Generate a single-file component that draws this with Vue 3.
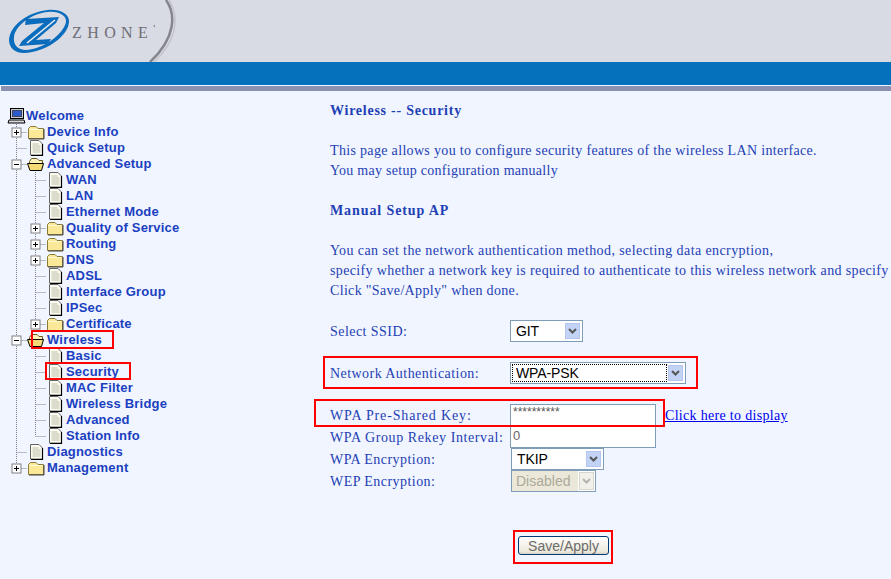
<script setup>
const tree = [
  { label: 'Device Info', level: 0, kind: 'folder', box: '+' },
  { label: 'Quick Setup', level: 0, kind: 'doc' },
  { label: 'Advanced Setup', level: 0, kind: 'open', box: '-' },
  { label: 'WAN', level: 1, kind: 'doc' },
  { label: 'LAN', level: 1, kind: 'doc' },
  { label: 'Ethernet Mode', level: 1, kind: 'doc' },
  { label: 'Quality of Service', level: 1, kind: 'folder', box: '+' },
  { label: 'Routing', level: 1, kind: 'folder', box: '+' },
  { label: 'DNS', level: 1, kind: 'folder', box: '+' },
  { label: 'ADSL', level: 1, kind: 'doc' },
  { label: 'Interface Group', level: 1, kind: 'doc' },
  { label: 'IPSec', level: 1, kind: 'doc' },
  { label: 'Certificate', level: 1, kind: 'folder', box: '+', last: true },
  { label: 'Wireless', level: 0, kind: 'open', box: '-' },
  { label: 'Basic', level: 1, kind: 'doc' },
  { label: 'Security', level: 1, kind: 'doc' },
  { label: 'MAC Filter', level: 1, kind: 'doc' },
  { label: 'Wireless Bridge', level: 1, kind: 'doc' },
  { label: 'Advanced', level: 1, kind: 'doc' },
  { label: 'Station Info', level: 1, kind: 'doc', last: true },
  { label: 'Diagnostics', level: 0, kind: 'doc' },
  { label: 'Management', level: 0, kind: 'folder', box: '+', last: true }
]
</script>

<template>
  <div class="page">
    <header class="top">
      <div class="brand">
        <svg class="logo" width="180" height="62" viewBox="0 0 180 62">
          <path d="M166 0C176 14 176 38 150 62" fill="none" stroke="#85858d" stroke-width="2.5" />
          <path d="M169 0C179 16 178 40 154 62" fill="none" stroke="#c4c4cc" stroke-width="1.5" />
          <path fill-rule="evenodd" fill="#0a6cbc" d="M48 10C60 9 69 14 69 21C69 36 46 52 24 53C14 53 9 47 9 40C10 25 28 12 48 10ZM48 12C32 13 15 26 14 37C13 45 18 50 26 50C43 49 63 35 66 22C67 16 59 11 48 12Z" />
          <path fill="#0a6cbc" d="M26 19L59 17L56 23L36 40L51 39L48 44L19 46L22 41L44 23L25 25Z" />
          <path fill="none" stroke="#e8ecf4" stroke-width="1.6" d="M55 20L27 43" />
        </svg>
        <span class="wordmark">ZHONE<sup>'</sup></span>
      </div>
    </header>
    <div class="blue"></div>
    <div class="band"></div>

    <div class="body">
      <nav class="tree">
        <div class="row">
          <svg class="slot" width="18" height="16" viewBox="0 0 18 16">
            <rect x="2.5" y="0.5" width="13" height="10" fill="#c8ccd8" stroke="#000" />
            <rect x="4.5" y="2.5" width="9" height="6" fill="#2a5cd0" stroke="#445" />
            <path d="M1 12h15l1 3H0z" fill="#d8d8d8" stroke="#000" stroke-width="1" />
          </svg>
          <a class="label">Welcome</a>
        </div>
        <div v-for="item in tree" :key="item.label" class="row">
          <svg v-if="item.level === 1" class="slot" width="19" height="16" viewBox="0 0 19 16">
            <path d="M8.5 0V16" class="dots" />
          </svg>
          <svg class="slot" width="19" height="16" viewBox="0 0 19 16">
            <path :d="item.last ? 'M8.5 0V8' : 'M8.5 0V16'" class="dots" />
            <path d="M8.5 8.5H19" class="dots" />
            <g v-if="item.box">
              <rect x="4" y="4" width="9" height="9" fill="#fff" stroke="#808080" />
              <path d="M6 8.5h5" stroke="#000" />
              <path v-if="item.box === '+'" d="M8.5 6v5" stroke="#000" />
            </g>
          </svg>
          <svg class="slot icon" width="20" height="16" viewBox="0 0 20 16">
            <g v-if="item.kind === 'doc'">
              <path d="M3.5 0.5H12L15.5 4V15H3.5Z" fill="#fbfbf0" stroke="#666" />
              <path d="M15.5 4V15.5H4" fill="none" stroke="#000" stroke-width="1.2" />
              <path d="M5.5 4h6M5.5 6h8M5.5 8h8M5.5 10h8M5.5 12h8" stroke="#bdbdaa" />
            </g>
            <g v-else-if="item.kind === 'folder'">
              <path d="M1.5 4.5L3.5 2.5H9L11 4.5H16.5V14.5H1.5Z" fill="#fbe997" stroke="#8a7a3a" />
              <path d="M2.5 5.5H15.5" stroke="#fffad8" />
              <path d="M17 5V15H2" fill="none" stroke="#444" />
            </g>
            <g v-else>
              <path d="M2.5 5.5L4.5 2.5H10L12 4.5H15.5V8H2.5Z" fill="#fdf3b8" stroke="#6a5a20" />
              <path d="M0.5 7.5H16.5L14.5 14.5H3Z" fill="#f6da75" stroke="#000" />
            </g>
          </svg>
          <a class="label">{{ item.label }}</a>
        </div>
      </nav>

      <main class="content">
        <h2 class="title">Wireless -- Security</h2>
        <p class="intro">
          <span class="line s33">This page allows you to configure security features of the wireless LAN interface.</span>
          <span class="line s28">You may setup configuration manually</span>
        </p>
        <h2 class="title section">Manual Setup AP</h2>
        <p class="intro">
          <span class="line s41">You can set the network authentication method, selecting data encryption,</span>
          <span class="line s36">specify whether a network key is required to authenticate to this wireless network and specify</span>
          <span class="line s33">Click "Save/Apply" when done.</span>
        </p>

        <form class="form" @submit.prevent>
          <div class="field">
            <label>Select SSID:</label>
            <div class="select ssid">
              <select><option>GIT</option></select>
              <span class="arrow"><svg width="9" height="6" viewBox="0 0 9 6"><path d="M1 1l3.5 3.5L8 1" fill="none" stroke="#555" stroke-width="2" /></svg></span>
            </div>
          </div>
          <div class="field gap">
            <label>Network Authentication:</label>
            <div class="select auth">
              <select class="focused"><option>WPA-PSK</option></select>
              <span class="arrow"><svg width="9" height="6" viewBox="0 0 9 6"><path d="M1 1l3.5 3.5L8 1" fill="none" stroke="#555" stroke-width="2" /></svg></span>
            </div>
          </div>
          <div class="field gap">
            <label class="wide-key">WPA Pre-Shared Key:</label>
            <div class="inline">
              <input class="text secret" type="text" value="**********" />
              <a class="link">Click here to display</a>
            </div>
          </div>
          <div class="field">
            <label class="wide-group">WPA Group Rekey Interval:</label>
            <input class="text" type="text" value="0" />
          </div>
          <div class="field">
            <label>WPA Encryption:</label>
            <div class="select tkip">
              <select><option>TKIP</option></select>
              <span class="arrow"><svg width="9" height="6" viewBox="0 0 9 6"><path d="M1 1l3.5 3.5L8 1" fill="none" stroke="#555" stroke-width="2" /></svg></span>
            </div>
          </div>
          <div class="field">
            <label>WEP Encryption:</label>
            <div class="select wep">
              <select disabled><option>Disabled</option></select>
              <span class="arrow off"><svg width="9" height="6" viewBox="0 0 9 6"><path d="M1 1l3.5 3.5L8 1" fill="none" stroke="#b5b5ae" stroke-width="2" /></svg></span>
            </div>
          </div>
          <div class="actions"><button type="button">Save/Apply</button></div>
        </form>
      </main>
    </div>

    <i class="mark m-wireless"></i>
    <i class="mark m-security"></i>
    <i class="mark m-auth"></i>
    <i class="mark m-key"></i>
    <i class="mark m-save"></i>
  </div>
</template>

<style>
html, body { margin: 0; overflow: hidden; background: #f0f5ff; }
</style>

<style scoped>
.page { position: relative; width: 891px; height: 579px; overflow: hidden; background: #f0f5ff; }
.top { height: 62px; background: #d8dae4; }
.brand { position: relative; height: 62px; }
.logo { display: block; }
.wordmark { position: absolute; left: 72px; top: 24px; font: 16px/18px "Liberation Serif", serif; letter-spacing: 5.4px; color: #6e6e74; }
.wordmark sup { font-size: 11px; line-height: 0; letter-spacing: 0; }
.blue { height: 23px; background: #0570bb; }
.band { height: 5px; margin-top: 1px; margin-left: 1px; background: #8a90b2; }
.body { display: flex; }
.tree { flex: 0 0 322px; padding: 17px 0 0 8px; }
.row { display: flex; align-items: center; height: 16px; }
.slot { flex: none; display: block; overflow: visible; }
.dots { stroke: #808080; stroke-dasharray: 1 1; fill: none; }
.label { font: bold 13px/16px "Liberation Sans", sans-serif; letter-spacing: 0.2px; color: #1a3fc0; white-space: nowrap; }
.content { flex: 1; min-width: 0; padding-top: 10px; font: 14px/20px "Liberation Serif", serif; letter-spacing: 0.33px; color: #1f3fb5; white-space: nowrap; }
.title { margin: 0; font: bold 14px/20px "Liberation Serif", serif; letter-spacing: 0.75px; }
.section { margin-top: 20px; letter-spacing: 0.9px; }
.intro { margin: 20px 0 0; }
.line { display: block; }
.s28 { letter-spacing: 0.28px; }
.s33 { letter-spacing: 0.33px; }
.s36 { letter-spacing: 0.36px; }
.s41 { letter-spacing: 0.41px; }
.form { margin-top: 19px; }
.field { display: grid; grid-template-columns: 180px 1fr; align-items: center; height: 22px; }
.field.gap { margin-top: 20px; }
.field label { padding-top: 2px; letter-spacing: 0.45px; }
.field label.wide-key { letter-spacing: 0.85px; }
.field label.wide-group { letter-spacing: 0.6px; }
.select { display: flex; align-items: stretch; height: 22px; box-sizing: border-box; border: 1px solid #7f9db9; background: #fff; }
.select select { flex: 1; min-width: 0; appearance: none; border: 0; margin: 1px 0 1px 1px; padding: 0 0 0 4px; background: transparent; font: 14px "Liberation Sans", sans-serif; letter-spacing: -0.1px; color: #000; }
.select select.focused { outline: 1px dotted #000; outline-offset: -1px; }
.select select:disabled { background: #ebe8d9; color: #aca899; margin: 0; opacity: 1; letter-spacing: 0; }
.arrow { flex: none; width: 15px; margin: 2px 2px 2px 1px; display: flex; align-items: center; justify-content: center; background: #c3d3f5; border: 1px solid #b4c6ee; box-sizing: border-box; }
.arrow.off { background: #f1f0ea; border-color: #d8d6cc; margin: 1px; }
.ssid { width: 73px; }
.auth { width: 176px; }
.tkip { width: 93px; margin-left: 1px; }
.wep { width: 85px; margin-left: 1px; }
.inline { display: flex; align-items: center; }
.text { width: 146px; height: 22px; box-sizing: border-box; border: 1px solid #7f9db9; background: #fff; padding: 0 0 3px 2px; font: 13px "Liberation Sans", sans-serif; color: #666; outline: 0; }
.secret { color: #555; padding-bottom: 7px; font-size: 12px; }
.link { margin: 2px 0 0 9px; letter-spacing: 0.31px; color: #0000ee; text-decoration: underline; }
.actions { margin: 44px 0 0 188px; }
button { display: block; width: 91px; height: 19px; padding: 0; box-sizing: border-box; border: 1px solid #003c74; border-radius: 3px; background: linear-gradient(#fff, #ece9dc 85%, #d6d0c5); font: 14px "Liberation Sans", sans-serif; color: #6b6b6b; }
.mark { position: absolute; box-sizing: border-box; border: 2px solid #f00; pointer-events: none; }
.m-wireless { left: 31px; top: 330px; width: 83px; height: 19px; }
.m-security { left: 45px; top: 362px; width: 86px; height: 18px; }
.m-auth { left: 323px; top: 356px; width: 375px; height: 33px; }
.m-key { left: 314px; top: 399px; width: 351px; height: 28px; }
.m-save { left: 513px; top: 530px; width: 100px; height: 34px; }
</style>
